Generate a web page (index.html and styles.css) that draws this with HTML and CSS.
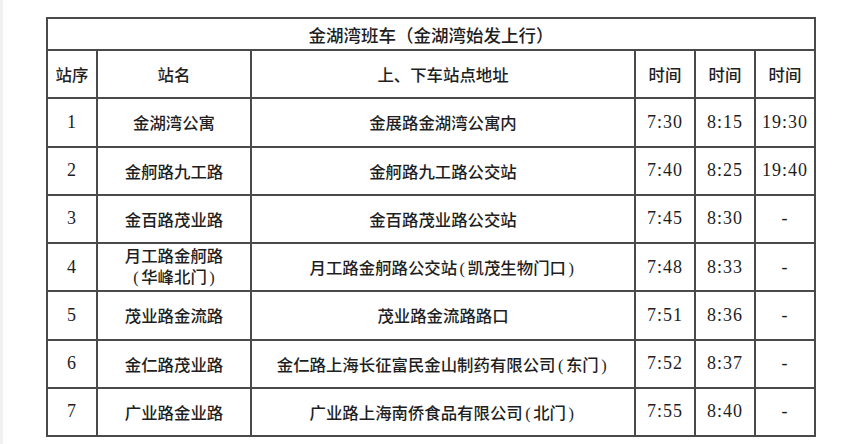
FILE: index.html
```html
<!DOCTYPE html>
<html lang="zh-CN">
<head>
<meta charset="utf-8">
<title>金湖湾班车</title>
<link rel="stylesheet" href="styles.css">
</head>
<body>
<div class="page">
  <div class="schedule">
    <div class="cell title">金湖湾班车（金湖湾始发上行）</div>

    <div class="cell">站序</div><div class="cell">站名</div><div class="cell">上、下车站点地址</div><div class="cell">时间</div><div class="cell">时间</div><div class="cell">时间</div>

    <div class="cell num">1</div><div class="cell">金湖湾公寓</div><div class="cell">金展路金湖湾公寓内</div><div class="cell num">7:30</div><div class="cell num">8:15</div><div class="cell num">19:30</div>

    <div class="cell num">2</div><div class="cell">金舸路九工路</div><div class="cell">金舸路九工路公交站</div><div class="cell num">7:40</div><div class="cell num">8:25</div><div class="cell num">19:40</div>

    <div class="cell num">3</div><div class="cell">金百路茂业路</div><div class="cell">金百路茂业路公交站</div><div class="cell num">7:45</div><div class="cell num">8:30</div><div class="cell num">-</div>

    <div class="cell num">4</div><div class="cell"><span class="two">月工路金舸路<br><span class="paren">(</span>华峰北门<span class="paren">)</span></span></div><div class="cell"><span>月工路金舸路公交站<span class="paren">(</span>凯茂生物门口<span class="paren">)</span></span></div><div class="cell num">7:48</div><div class="cell num">8:33</div><div class="cell num">-</div>

    <div class="cell num">5</div><div class="cell">茂业路金流路</div><div class="cell">茂业路金流路路口</div><div class="cell num">7:51</div><div class="cell num">8:36</div><div class="cell num">-</div>

    <div class="cell num">6</div><div class="cell">金仁路茂业路</div><div class="cell"><span>金仁路上海长征富民金山制药有限公司<span class="paren">(</span>东门<span class="paren">)</span></span></div><div class="cell num">7:52</div><div class="cell num">8:37</div><div class="cell num">-</div>

    <div class="cell num">7</div><div class="cell">广业路金业路</div><div class="cell"><span>广业路上海南侨食品有限公司<span class="paren">(</span>北门<span class="paren">)</span></span></div><div class="cell num">7:55</div><div class="cell num">8:40</div><div class="cell num">-</div>
  </div>
</div>
</body>
</html>
```
FILE: styles.css
```css
html, body {
  margin: 0;
  padding: 0;
  background: #ffffff;
}
body {
  font-family: "Liberation Serif", "Noto Sans CJK SC", serif;
  color: #1e1e1e;
}
.page {
  width: 864px;
  height: 444px;
  box-sizing: border-box;
  padding: 17px 0 0 43px;
  border-left: 3px solid #f1f1f1;
  overflow: hidden;
}
.schedule {
  display: grid;
  grid-template-columns: 50px 154px 384px 60px 60px 60px;
  grid-template-rows: 32px repeat(8, 48.25px);
  width: max-content;
  border-top: 2px solid #4a4a4a;
  border-left: 2px solid #4a4a4a;
}
.cell {
  box-sizing: border-box;
  border-right: 2px solid #4a4a4a;
  border-bottom: 2px solid #4a4a4a;
  display: flex;
  align-items: center;
  justify-content: center;
  text-align: center;
  font-size: 16.4px;
  font-weight: 500;
  white-space: nowrap;
}
.title {
  grid-column: 1 / -1;
  font-size: 17.5px;
}
.num {
  font-size: 18px;
  letter-spacing: 1px;
}
.paren {
  padding: 0 2.5px;
}
.two {
  display: block;
  line-height: 21px;
}
```
